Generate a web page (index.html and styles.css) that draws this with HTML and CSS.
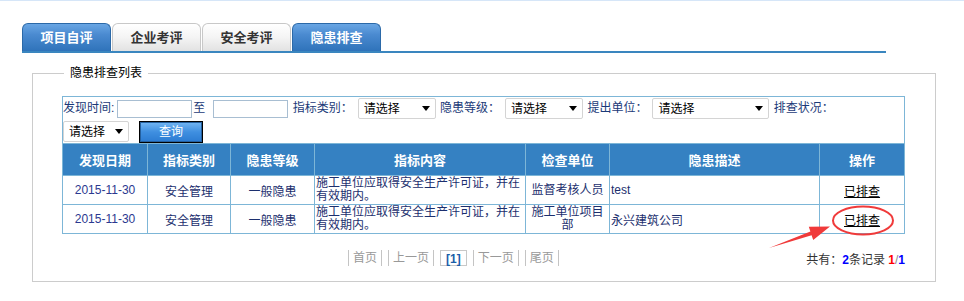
FILE: index.html
```html
<!DOCTYPE html>
<html lang="zh-CN">
<head>
  <meta charset="UTF-8">
  <title>隐患排查</title>
  <link rel="stylesheet" href="styles.css">
</head>
<body>
  <div class="topline"></div>
  <div class="tabs">
    <a class="tab tab-on" href="#">项目自评</a>
    <a class="tab" href="#">企业考评</a>
    <a class="tab" href="#">安全考评</a>
    <a class="tab tab-on" href="#">隐患排查</a>
  </div>

  <fieldset class="panel">
    <legend>隐患排查列表</legend>
    <table class="grid">
      <colgroup>
        <col style="width:85px"><col style="width:83px"><col style="width:84px"><col style="width:211px">
        <col style="width:84px"><col style="width:210px"><col style="width:85px">
      </colgroup>
      <tr>
        <td colspan="7" class="filter">
          <span class="lbl lbl-first">发现时间:</span><input class="date" type="text"><span class="to">至</span><input class="date" type="text">
          <span class="lbl">指标类别：</span><span class="pick"><select><option>请选择</option></select></span>
          <span class="lbl">隐患等级：</span><span class="pick"><select><option>请选择</option></select></span>
          <span class="lbl">提出单位：</span><span class="pick pick-wide"><select><option>请选择</option></select></span>
          <span class="lbl">排查状况：</span><span class="group"><span class="pick pick-small"><select><option>请选择</option></select></span><button class="btn-search" type="button">查询</button></span>
        </td>
      </tr>
      <tr class="head">
        <th>发现日期</th>
        <th>指标类别</th>
        <th>隐患等级</th>
        <th>指标内容</th>
        <th>检查单位</th>
        <th>隐患描述</th>
        <th>操作</th>
      </tr>
      <tr>
        <td class="date-cell">2015-11-30</td>
        <td>安全管理</td>
        <td>一般隐患</td>
        <td class="text-cell">施工单位应取得安全生产许可证，并在有效期内。</td>
        <td class="unit-cell">监督考核人员</td>
        <td class="desc-cell">test</td>
        <td class="ops"><a href="#">已排查</a></td>
      </tr>
      <tr>
        <td class="date-cell">2015-11-30</td>
        <td>安全管理</td>
        <td>一般隐患</td>
        <td class="text-cell">施工单位应取得安全生产许可证，并在有效期内。</td>
        <td class="unit-cell">施工单位项目部</td>
        <td class="desc-cell">永兴建筑公司</td>
        <td class="ops"><a href="#">已排查</a></td>
      </tr>
    </table>

    <div class="pagebar">
      <div class="pager">
        <a href="#">首页</a>
        <a href="#">上一页</a>
        <span class="cur">[1]</span>
        <a href="#">下一页</a>
        <a href="#">尾页</a>
      </div>
      <div class="total">共有：<b class="blue">2</b>条记录 <b class="red">1</b><span class="slash">/</span><b class="blue">1</b></div>
    </div>
  </fieldset>

  <svg class="mark" width="964" height="301" viewBox="0 0 964 301">
    <ellipse cx="863" cy="220.5" rx="30" ry="14" fill="none" stroke="#f03a3a" stroke-width="2"/>
    <polygon points="769,248 810.4,231.4 808.8,226.7 830,226.6 813.2,239.9 811.6,235.2" fill="#f03a3a"/>
  </svg>
</body>
</html>
```

FILE: styles.css
```css
body {
  margin: 0;
  font: 12px "Liberation Sans", "Noto Sans CJK SC", sans-serif;
  color: #333;
  position: relative;
  width: 964px;
  height: 301px;
  overflow: hidden;
  background: #fff;
}
.topline {
  height: 1px;
  background: #d6e6f8;
}
.tabs {
  display: flex;
  gap: 1px;
  margin: 22px 0 0 22px;
  width: 864px;
  border-bottom: 2px solid #3a86bf;
}
.tab {
  box-sizing: border-box;
  width: 89px;
  height: 28px;
  line-height: 27px;
  text-align: center;
  font-size: 13px;
  font-weight: bold;
  color: #333;
  text-decoration: none;
  border: 1px solid #c8c8c8;
  border-bottom: 0;
  border-radius: 6px 6px 0 0;
  background: linear-gradient(#fff, #f4f4f4 50%, #e2e2e2);
}
.tab-on {
  color: #fff;
  border-color: #2b69a8;
  background: linear-gradient(#69a6e4, #4a8ad0 40%, #2f73ba);
}
.panel {
  box-sizing: border-box;
  width: 904px;
  margin: 12px 0 0 32px;
  padding: 15px 30px 15px 29px;
  border: 1px solid #ccc;
}
.panel legend {
  margin-left: 2px;
  padding: 0 6px;
  line-height: 16px;
  color: #000;
}
.grid {
  width: 843px;
  table-layout: fixed;
  border-collapse: collapse;
  border: 1px solid #76b3d4;
}
.grid th,
.grid td {
  border: 1px solid #7db6d7;
  padding: 0;
  text-align: center;
  color: #1c2f6e;
}
.grid .filter {
  text-align: left;
  line-height: 23px;
  color: #1b3a78;
}
.lbl {
  margin-left: 1px;
}
.lbl-first {
  margin-left: 0;
}
.date {
  box-sizing: border-box;
  width: 75px;
  height: 18px;
  margin: 0 0 0 3px;
  padding: 0;
  border: 1px solid #a8bed2;
  vertical-align: middle;
}
.to {
  margin: 0 5px 0 1px;
}
.pick {
  position: relative;
  display: inline-block;
  vertical-align: middle;
  line-height: 0;
  margin-left: 5px;
}
.pick select {
  appearance: none;
  width: 78px;
  height: 21px;
  margin: 0;
  padding: 0 0 0 5px;
  border: 1px solid #d4d4d4;
  border-radius: 2px;
  background: #fff;
  font: 12px "Liberation Sans", "Noto Sans CJK SC", sans-serif;
  color: #000;
}
.pick::after {
  content: "";
  position: absolute;
  right: 6px;
  top: 8px;
  border-left: 4px solid transparent;
  border-right: 4px solid transparent;
  border-top: 5px solid #000;
}
.pick-wide select {
  width: 117px;
}
.pick-small {
  margin-left: 0;
}
.pick-small select {
  width: 66px;
}
.group {
  white-space: nowrap;
}
.btn-search {
  box-sizing: border-box;
  width: 64px;
  height: 22px;
  margin-left: 10px;
  padding: 0 0 5px;
  vertical-align: middle;
  border: 1px solid #000;
  box-shadow: inset 0 0 0 1px #24609f;
  background: linear-gradient(#74b6f2, #3f8fe0 50%, #2b7bd2);
  color: #fff;
  font: 12px "Liberation Sans", "Noto Sans CJK SC", sans-serif;
}
.grid .head th {
  height: 31px;
  background: #3581c2;
  color: #fff;
  font-size: 13px;
  font-weight: bold;
}
.grid tr td {
  height: 28px;
}
.grid .filter {
  height: auto;
}
.grid .date-cell {
  color: #2b3990;
}
.grid .text-cell {
  text-align: left;
  line-height: 13px;
  padding: 0 1px;
}
.grid .unit-cell {
  line-height: 13px;
  padding: 0 2px;
}
.grid .desc-cell {
  text-align: left;
  padding-left: 1px;
}
.ops a {
  color: #000;
  text-decoration: underline;
}
.pagebar {
  display: flex;
  align-items: center;
  height: 16px;
  margin-top: 16px;
}
.pager {
  display: flex;
  gap: 6px;
  margin-left: 286px;
}
.pager a,
.pager .cur {
  height: 16px;
  line-height: 16px;
  padding: 0 4px;
  color: #999;
  text-decoration: none;
  border-left: 1px solid #c4c4c4;
  border-right: 1px solid #c4c4c4;
}
.pager .cur {
  box-sizing: border-box;
  padding: 0 5px;
  border: 1px solid #c8c8c8;
  color: #1b5ea8;
  font-weight: bold;
}
.total {
  margin-left: auto;
  color: #333;
}
.total .blue {
  color: #00f;
}
.total .red {
  color: #f00;
}
.total .slash {
  color: #888;
}
.mark {
  position: absolute;
  left: 0;
  top: 0;
  pointer-events: none;
}
```
